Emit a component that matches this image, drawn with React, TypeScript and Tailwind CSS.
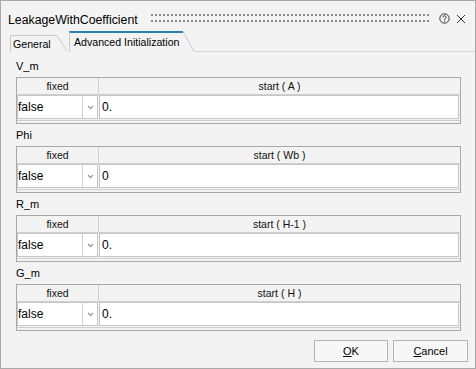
import React from "react";

function Section({ label, unit, value }: { label: string; unit: string; value: string }) {
  return (
    <div className="flex flex-col">
      <div className="h-[22px] leading-[22px] pl-[15px] text-[11px] text-black">{label}</div>
      <div className="ml-[15px] w-[445px] h-[47px] border border-[#a9a9a9] flex flex-col">
        <div className="flex h-[17px] border-b border-[#cfcfcf] text-[10.5px] leading-[16px] text-[#111]">
          <div className="w-[82px] border-r border-[#cfcfcf] text-center">fixed</div>
          <div className="flex-1 text-center">start ( {unit} )</div>
        </div>
        <div className="flex h-[26px] border-b border-[#cfcfcf]">
          <div className="w-[81px] h-[24px] border border-[#c6c6c6] bg-white flex">
            <div className="flex-1 flex items-center text-[12px] text-black leading-none">false</div>
            <div className="w-[15px] border-l border-[#d0d0d0] flex items-center justify-center">
              <svg width="7" height="5" viewBox="0 0 7 5">
                <polyline points="1,1 3.5,3.5 6,1" fill="none" stroke="#9a9a9a" strokeWidth="1.3" />
              </svg>
            </div>
          </div>
          <div className="ml-[1px] mr-[1px] flex-1 h-[24px] border border-[#c6c6c6] bg-white flex items-center pl-[2px] text-[12px] text-black leading-none">
            {value}
          </div>
        </div>
      </div>
    </div>
  );
}

export default function App() {
  return (
    <div className="w-[476px] h-[369px] border border-[#a9a9a9] bg-[#f3f3f3] flex flex-col font-['Liberation_Sans',Arial,sans-serif] overflow-hidden">
      {/* title bar */}
      <div className="h-[30px] pt-[8px] flex items-center pr-[9px]">
        <div className="pl-[7px] text-[12.3px] text-black leading-none whitespace-nowrap">LeakageWithCoefficient</div>
        <svg className="flex-1 h-[12px] ml-[13px] mr-[10px] mb-[3px]" height="12" shapeRendering="crispEdges">
          <defs>
            <pattern id="grip" width="4" height="12" patternUnits="userSpaceOnUse">
              <rect x="0" y="1" width="2" height="2" fill="#8a8a8a" />
              <rect x="0" y="7" width="2" height="2" fill="#8a8a8a" />
            </pattern>
          </defs>
          <rect x="0" y="0" width="100%" height="12" fill="url(#grip)" />
        </svg>
        <svg width="11" height="11" viewBox="0 0 11 11" className="mb-[3px]">
          <circle cx="5.5" cy="5.5" r="4.7" fill="none" stroke="#333" strokeWidth="1" />
          <path d="M3.9 4.4a1.6 1.6 0 1 1 2.4 1.3c-.5.3-.8.6-.8 1.1v.4" fill="none" stroke="#333" strokeWidth="1" />
          <circle cx="5.5" cy="8.2" r="0.6" fill="#333" />
        </svg>
        <svg width="10" height="10" viewBox="0 0 10 10" className="ml-[6px] mb-[2px]">
          <path d="M1 1L9 9M9 1L1 9" stroke="#333" strokeWidth="1" />
        </svg>
      </div>
      {/* tabs */}
      <div className="h-[21px] flex items-end">
        <div className="w-[9px] h-full" />
        <div className="w-[47px] h-[17px] border-l border-t border-[#c8c8c8] pl-[2px] flex items-center text-[10.6px] text-black leading-none">
          General
        </div>
        <svg width="10" height="17" viewBox="0 0 10 17" className="block">
          <line x1="0" y1="0.5" x2="10" y2="16.5" stroke="#c8c8c8" strokeWidth="1" />
        </svg>
        <div className="w-[2px] h-full" />
        <div className="w-[114px] h-[21px] border-l border-[#c8c8c8] border-t-2 border-t-[#2b80b0] pl-[4px] flex items-center text-[10.6px] text-black leading-none">
          Advanced Initialization
        </div>
        <svg width="11" height="21" viewBox="0 0 11 21" className="block">
          <line x1="0" y1="0.5" x2="11" y2="20.5" stroke="#c8c8c8" strokeWidth="1" />
        </svg>
        <div className="flex-1 h-full border-b border-[#d6d6d6]" />
      </div>
      {/* content */}
      <div className="pt-[3px] flex flex-col">
        <Section label="V_m" unit="A" value="0." />
        <Section label="Phi" unit="Wb" value="0" />
        <Section label="R_m" unit="H-1" value="0." />
        <Section label="G_m" unit="H" value="0." />
      </div>
      {/* buttons */}
      <div className="mt-[9px] flex justify-end gap-[5px] pr-[7px]">
        <button className="w-[74px] h-[22px] border border-[#b4b4b4] bg-[#f7f7f7] text-[11px] text-black leading-none">
          <span className="underline">O</span>K
        </button>
        <button className="w-[75px] h-[22px] border border-[#b4b4b4] bg-[#f7f7f7] text-[11px] text-black leading-none">
          <span className="underline">C</span>ancel
        </button>
      </div>
    </div>
  );
}
